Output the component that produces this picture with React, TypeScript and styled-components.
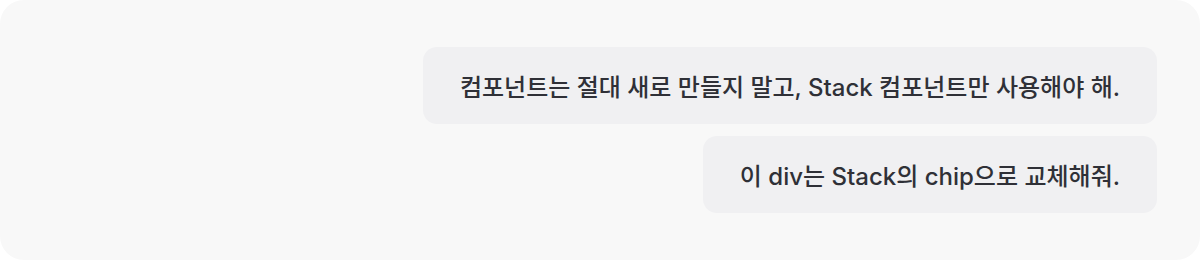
import React from "react";
import styled, { createGlobalStyle } from "styled-components";

const Global = createGlobalStyle`
  html, body { margin: 0; padding: 0; background: #ffffff; }
  body { font-family: Inter, "Noto Sans CJK KR", sans-serif; }
`;

const Panel = styled.div`
  box-sizing: border-box;
  width: 1200px;
  height: 260px;
  background: #f8f8f8;
  border-radius: 24px;
  padding: 47px 43px 0 0;
  display: flex;
  flex-direction: column;
  align-items: flex-end;
  gap: 12px;
`;

const Bubble = styled.div`
  box-sizing: border-box;
  height: 77px;
  padding: 0 37px 0 37px;
  display: flex;
  align-items: center;
  background: #f0f0f2;
  border-radius: 14px;
  color: #2f3037;
  font-family: Inter, "Noto Sans CJK KR", sans-serif;
  font-size: 24px;
  font-weight: 500;
  letter-spacing: 0;
  white-space: nowrap;
`;

const messages = [
  "컴포넌트는 절대 새로 만들지 말고, Stack 컴포넌트만 사용해야 해.",
  "이 div는 Stack의 chip으로 교체해줘.",
];

export default function App() {
  return (
    <>
      <Global />
      <Panel>
        {messages.map((m) => (
          <Bubble key={m}>{m}</Bubble>
        ))}
      </Panel>
    </>
  );
}
